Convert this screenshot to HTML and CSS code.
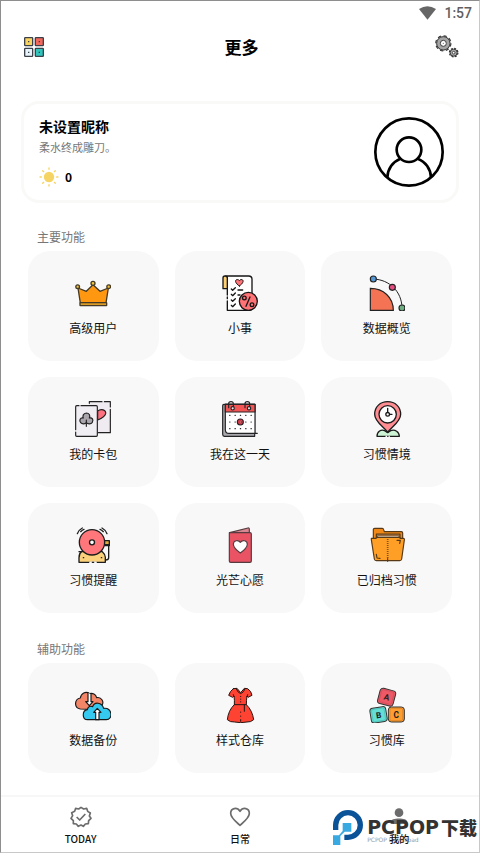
FILE: index.html
```html
<!DOCTYPE html>
<html lang="zh-CN">
<head>
<meta charset="utf-8">
<meta name="viewport" content="width=device-width, initial-scale=1">
<title>更多</title>
<link rel="stylesheet" href="styles.css">
</head>
<body>
<div class="app">
  <div class="status">
    <svg class="wifi" viewBox="0 0 51 42" aria-hidden="true"><path d="M0 9Q25-8 51 9L25.500 41Z" fill="#666"/></svg>
    <span>1:57</span>
  </div>

  <header class="header">
    <button class="icon-btn" type="button" aria-label="布局">
      <svg class="layout-icon" viewBox="0 0 60 60" stroke="#3c4048" stroke-width="4">
        <rect x="2" y="2" width="24" height="24" rx="2" fill="#fbd45f"/>
        <rect x="34" y="2" width="24" height="24" rx="2" fill="#f4685c"/>
        <rect x="2" y="34" width="24" height="24" rx="2" fill="#e8f4fb"/>
        <rect x="34" y="34" width="24" height="24" rx="2" fill="#2fc5bd"/>
        <path d="M12 14h4M44 14h4M12 46h4M44 46h4"/>
      </svg>
    </button>
    <h1 class="title">更多</h1>
    <button class="icon-btn icon-btn-end" type="button" aria-label="设置">
      <svg class="gear-icon" viewBox="0 0 72 69" fill="none">
        <circle cx="25" cy="25" r="21" stroke="#333" stroke-width="7" stroke-dasharray="9 7.500"/>
        <circle cx="25" cy="25" r="15" stroke="#a5a5a5" stroke-width="13"/>
        <circle cx="25" cy="25" r="20" stroke="#3c3c3c" stroke-width="3"/>
        <circle cx="25" cy="25" r="9" fill="#fff" stroke="#3c3c3c" stroke-width="3"/>
        <circle cx="25" cy="25" r="2" fill="#777"/>
        <circle cx="56" cy="53" r="12.500" stroke="#333" stroke-width="4" stroke-dasharray="6 3.800"/>
        <circle cx="56" cy="53" r="10.500" fill="#aaa" stroke="#3c3c3c" stroke-width="3"/>
        <circle cx="56" cy="53" r="4" fill="#fff" stroke="#444" stroke-width="3"/>
      </svg>
    </button>
  </header>

  <main class="main">
    <section class="profile">
      <div class="profile-text">
        <h2 class="nickname">未设置昵称</h2>
        <p class="motto">柔水终成雕刀。</p>
        <div class="sun-row">
          <svg class="sun" viewBox="0 0 60 60" aria-hidden="true">
            <circle cx="30" cy="30" r="15.500" fill="#f6d464"/>
            <path d="M30 3v4M30 53v4M3 30h4M53 30h4M11 11l3 3M46 46l3 3M11 49l3-3M46 14l3-3" stroke="#f6d464" stroke-width="4" stroke-linecap="round"/>
          </svg>
          <span>0</span>
        </div>
      </div>
      <svg class="avatar" viewBox="0 0 210 210" fill="none" stroke="#000" stroke-width="8" role="img" aria-label="头像">
        <circle cx="105" cy="105" r="101"/>
        <circle cx="105" cy="98" r="37"/>
        <path d="M40 181C41 156 56 134 79 125M131 125c24 9 39 31 40 56"/>
      </svg>
    </section>

    <h2 class="section-title">主要功能</h2>
    <div class="grid">
      <button class="tile" type="button">
        <svg class="tile-icon" viewBox="0 0 108 108" stroke="#443a26" stroke-width="4" stroke-linejoin="round">
          <path d="M9 39L34 49 54 29 75 49 100 39 93 84H16Z" fill="#ff9810"/>
          <rect x="15" y="83" width="80" height="9" rx="1" fill="#d99a26"/>
          <circle cx="8" cy="35" r="5.500" fill="#f4c53b"/><circle cx="54" cy="25" r="6" fill="#f4c53b"/><circle cx="101" cy="35" r="5.500" fill="#f4c53b"/>
        </svg>
        <span>高级用户</span>
      </button>
      <button class="tile" type="button">
        <svg class="tile-icon" viewBox="0 0 108 108" fill="none" stroke="#161616" stroke-width="4" stroke-linejoin="round" stroke-linecap="round">
          <path d="M16 60V8Q16 3 11 3H80Q90 3 90 13V100Q90 106 84 106H16V78" fill="#fff"/>
          <path d="M16 41H3V9Q3 3 9 3T16 9Z" fill="#fbcf72"/>
          <path d="M52 33C30 18 45 8 52 17 59 8 74 18 52 33Z" fill="#ff7478" stroke-width="3"/>
          <path d="M28 42l4 4 8-8M48 45h14M28 58l4 4 8-8M48 60h6M28 75l4 4 8-8M28 91l4 4 8-8M16 66v5"/>
          <circle cx="79" cy="79" r="27" fill="#ff7276"/>
          <circle cx="67" cy="69" r="5.500"/><circle cx="90" cy="89" r="5.500"/><path d="M84 66L72 94"/>
        </svg>
        <span>小事</span>
      </button>
      <button class="tile" type="button">
        <svg class="tile-icon" viewBox="0 0 108 108" stroke="#222" stroke-width="3.500" fill="none">
          <path d="M4 40V106H73C73 67 43 40 4 40Z" fill="#f47355"/>
          <path d="M13 12C62 14 98 50 99 98" stroke-width="3"/>
          <circle cx="13" cy="12" r="9" fill="#5597d3"/><circle cx="70" cy="37" r="9" fill="#e64c80"/><circle cx="99" cy="99" r="9" fill="#6fae82"/>
        </svg>
        <span>数据概览</span>
      </button>

      <button class="tile" type="button">
        <svg class="tile-icon" viewBox="0 0 108 108" fill="none" stroke="#222" stroke-width="3.500" stroke-linecap="round" stroke-linejoin="round">
          <path d="M42 2H106V95H68V15H42Z" fill="#efebf1" stroke="none"/>
          <path d="M43 7V2H81M88 2H106V18M106 25V95H70"/>
          <path d="M68 30C78 22 94 26 92 38 90 48 78 53 68 57Z" fill="#ff7181"/>
          <rect x="2" y="14" width="65" height="92" rx="3" fill="#f1eef3" stroke="none"/>
          <path d="M12 14H5Q2 14 2 17V86M2 93V103Q2 106 5 106H64Q67 106 67 103V17Q67 14 64 14H18"/>
          <path d="M34 36C25 37 22 45 25 51 15 49 12 59 17 65 22 71 31 69 34 65 38 70 48 70 52 64 56 56 52 49 43 51 47 43 42 36 34 36Z" fill="#aaa5ad"/>
          <path d="M34 57V76"/>
        </svg>
        <span>我的卡包</span>
      </button>
      <button class="tile" type="button">
        <svg class="tile-icon" viewBox="0 0 108 108" fill="none" stroke="#242427" stroke-width="3.500" stroke-linejoin="round" stroke-linecap="round">
          <path d="M6 10H98V106H7Q2 106 2 100V14Q2 10 6 10Z" fill="#a9a9ad"/>
          <path d="M10 10H99V97H21Q10 97 10 86Z" fill="#fff"/>
          <path d="M10 10H99V33H10Z" fill="#f35555"/>
          <path d="M20 20V8Q20 2 27 2T34 8V16M69 20V8Q69 2 76 2T83 8V16M99 97h7"/>
          <circle cx="32" cy="22" r="5" fill="#e9e9ed"/><circle cx="81" cy="22" r="5" fill="#e9e9ed"/>
          <path d="M23 43h1M39 43h1M55 43h1M71 43h1M87 43h1M23 63h1M39 63h1M71 63h1M87 63h1M23 83h1M39 83h1M55 83h1M71 83h1M87 83h1"/>
          <circle cx="55" cy="63" r="9" fill="#ed3b4d"/><circle cx="55" cy="63" r="3" fill="#ff8186" stroke-width="1"/>
        </svg>
        <span>我在这一天</span>
      </button>
      <button class="tile" type="button">
        <svg class="tile-icon" viewBox="0 0 108 108" fill="none" stroke="#1c1c1c" stroke-width="4" stroke-linejoin="round" stroke-linecap="round">
          <path d="M24 106C24 91 37 84 47 89L56 95 65 89C78 84 91 93 91 106Z" fill="#cdf4d4"/>
          <path d="M51 106h10" stroke="#f8f8f8"/><path d="M56 106h1"/>
          <path d="M56 94C47 79 17 64 17 40 17 17 34 2 56 2S95 17 95 40C95 64 65 79 56 94Z" fill="#ff8d92"/>
          <circle cx="56" cy="40" r="26" fill="#fff"/>
          <circle cx="56" cy="40" r="5.500"/><path d="M56 34V22M62 40h7"/>
        </svg>
        <span>习惯情境</span>
      </button>

      <button class="tile" type="button">
        <svg class="tile-icon" viewBox="0 0 108 108" fill="none" stroke="#1d1d1d" stroke-width="4" stroke-linejoin="round" stroke-linecap="round">
          <path d="M88 44H103V56H91M101 56V92Q101 99 91 99"/>
          <path d="M86 41H103V53H86Z" fill="#e0ac3e"/>
          <path d="M12 74H82Q91 82 91 91V106H12V92Q12 79 20 74Z" fill="#fbd27b"/>
          <path d="M45 106h18" stroke="#f8f8f8" stroke-width="5"/><path d="M52 106h4M25 92h1M79 92h1"/>
          <circle cx="51" cy="46" r="38" fill="#ff777b"/>
          <circle cx="51" cy="46" r="7.500" fill="#fff"/>
          <path d="M7 20Q12 8 22 3M96 20Q91 8 81 3M85 14Q80 9 75 7M17 14Q22 9 27 7"/>
        </svg>
        <span>习惯提醒</span>
      </button>
      <button class="tile" type="button">
        <svg class="tile-icon" viewBox="0 0 108 108" stroke="#563b40" stroke-width="3.500" stroke-linejoin="round">
          <path d="M23 17L78 3Q82 2 82 7V18Z" fill="#d8868f"/>
          <path d="M22 17H84Q88 17 88 21V102Q88 106 84 106H26Q22 106 22 102Z" fill="#e95363"/>
          <path d="M55 78C42 69 34 62 34 52 34 40 49 37 55 46 61 37 76 40 76 52 76 62 68 69 55 78Z" fill="#fff"/>
        </svg>
        <span>光芒心愿</span>
      </button>
      <button class="tile" type="button">
        <svg class="tile-icon" viewBox="0 0 108 108" fill="none" stroke="#573817" stroke-width="3.500" stroke-linejoin="round" stroke-linecap="round">
          <path d="M13 45V7Q13 4 17 4H40Q43 4 44 8L46 14H97Q101 14 101 18V43Z" fill="#f18815"/>
          <path d="M22 38V21H93V38" fill="#a77545"/>
          <path d="M27 27H89V37H27Z" fill="#eee2ce" stroke-width="1"/>
          <path d="M7 34H21L25 31H90L94 34H103Q107 34 106 39L98 96Q97 101 92 101H22Q17 101 16 96L7 38Z" fill="#ff9f25"/>
          <path d="M56 36V96" stroke-width="5" stroke-dasharray="2 4" stroke-linecap="butt"/>
          <path d="M56 95v8M22 82l2 11 9 1M84 40h10l-2 9"/>
        </svg>
        <span>已归档习惯</span>
      </button>
    </div>

    <h2 class="section-title section-title-next">辅助功能</h2>
    <div class="grid">
      <button class="tile" type="button">
        <svg class="tile-icon" viewBox="0 0 108 108" stroke="#181818" stroke-width="3.500" stroke-linejoin="round" stroke-linecap="round">
          <path d="M16 66C-4 62-2 36 16 33 18 19 32 11 44 20 53 17 62 22 65 32 79 29 88 44 81 55L54 67Z" fill="#f48668"/>
          <path d="M39 17V44H32L43 56 54 44H48V22" fill="#fff"/>
          <path d="M38 98C20 98 21 70 37 68 39 58 47 56 53 59 58 44 80 45 86 64 112 60 115 98 94 98Z" fill="#35c9f0"/>
          <path d="M62 98V76H56L67 64 78 76H72V98Z" fill="#fff"/>
        </svg>
        <span>数据备份</span>
      </button>
      <button class="tile" type="button">
        <svg class="tile-icon" viewBox="0 0 108 108" fill="none" stroke="#251512" stroke-width="3" stroke-linejoin="round" stroke-linecap="round">
          <path d="M34 5L45 4 56 17 67 4 77 5Q88 12 90 25L78 31 75 27Q73 40 73 53 91 70 95 98 86 106 75 105L56 107 38 105Q24 106 16 98 19 70 37 53 38 40 36 27L32 31 20 25Q24 12 34 5Z" fill="#ff4333"/>
          <path d="M43 6Q47 17 56 20 65 17 69 6M37 53H73M67 54V73M56 75v1M56 28v1M56 36v1M56 44v1M56 87v1M56 98v5M34 23l2 6M77 23l-2 6"/>
        </svg>
        <span>样式仓库</span>
      </button>
      <button class="tile" type="button">
        <svg class="tile-icon" viewBox="0 0 108 108" stroke="#333" stroke-width="3">
          <g transform="rotate(15 53 30)"><rect x="29" y="7" width="48" height="47" rx="9" fill="#ed5966"/><rect x="34" y="11" width="38" height="38" rx="5" fill="none" stroke="#c94c58" stroke-width="2"/><text class="block-letter" x="53" y="39">A</text></g>
          <g transform="rotate(-9 29 86)"><rect x="5" y="61" width="48" height="45" rx="9" fill="#63dfd5"/><rect x="10" y="65" width="38" height="37" rx="5" fill="none" stroke="#4bb8b1" stroke-width="2"/><text class="block-letter" x="29" y="93">B</text></g>
          <rect x="58" y="60" width="48" height="45" rx="9" fill="#ff9d30"/><rect x="63" y="64" width="38" height="37" rx="5" fill="none" stroke="#cf7e28" stroke-width="2"/><text class="block-letter" x="82" y="92">C</text>
        </svg>
        <span>习惯库</span>
      </button>
    </div>
  </main>

  <nav class="nav">
    <a class="nav-item" href="#today">
      <svg class="nav-icon" viewBox="0 0 66 66" fill="none" stroke="#6c6c6c" stroke-width="5" stroke-linejoin="round">
        <path d="M33 4L41 9 50 7 53 16 61 21 58 30 63 37 56 44 55 53 46 54 40 61 33 57 25 61 19 54 10 53 10 44 3 37 8 29 5 20 14 16 17 7 26 9Z"/>
        <path d="M20 33L29 42 46 24"/>
      </svg>
      <span>TODAY</span>
    </a>
    <a class="nav-item" href="#daily">
      <svg class="nav-icon" viewBox="0 0 66 66" fill="none" stroke="#6c6c6c" stroke-width="5" stroke-linejoin="round">
        <path d="M33 58C20 47 5 36 5 22 5 6 24 2 33 16 42 2 61 6 61 22 61 36 46 47 33 58Z"/>
      </svg>
      <span>日常</span>
    </a>
    <a class="nav-item" href="#mine" aria-current="page">
      <svg class="nav-icon" viewBox="0 0 66 66" fill="#6c6c6c"><circle cx="33" cy="20" r="13"/><path d="M8 54V48C8 34 58 34 58 48V54Z"/></svg>
      <span>我的</span>
    </a>
    <div class="watermark">
      <svg class="mark" viewBox="0 0 90 105" aria-hidden="true">
        <path d="M8 60V45A37 37 0 1 1 45 82H34" fill="none" stroke="#0b5398" stroke-width="16"/>
        <path d="M29 39H55V65H35L22 78V105H0V76H18L29 63Z" fill="#39a9e2"/>
      </svg>
      <div class="mark-words">
        <div class="mark-name"><span class="mark-latin">PCPOP</span><span>下载</span></div>
        <div class="mark-sub">PCPOP Download</div>
      </div>
    </div>
  </nav>
</div>
</body>
</html>
```
FILE: styles.css
```css
* {
  box-sizing: border-box;
}

body {
  margin: 0;
  background: #fff;
  color: #111;
  font-family: "Noto Sans CJK SC", sans-serif;
}

h1, h2, p {
  margin: 0;
}

button {
  border: 0;
  padding: 0;
  background: none;
  color: inherit;
  font: inherit;
}

svg {
  display: block;
  flex: none;
}

.app {
  display: flex;
  flex-direction: column;
  min-height: 100vh;
  border: 1px solid #c8c8c8;
  border-top-color: #8e8e8e;
  border-left-color: #8e8e8e;
}

.status {
  display: flex;
  align-items: center;
  justify-content: flex-end;
  gap: 8px;
  height: 23px;
  padding-right: 7px;
  color: #5f5f5f;
  font: 500 14px/20px Roboto, sans-serif;
}

.wifi {
  width: 17px;
  height: 14px;
}

.header {
  display: grid;
  grid-template-columns: 1fr auto 1fr;
  align-items: center;
  height: 45px;
  padding: 0 20px 0 23px;
}

.icon-btn {
  justify-self: start;
}

.icon-btn-end {
  justify-self: end;
}

.layout-icon {
  width: 20px;
  height: 20px;
}

.gear-icon {
  width: 24px;
  height: 23px;
}

.title {
  font-size: 17px;
  line-height: 24px;
  color: #000;
}

.main {
  padding: 32px 20px 22px;
}

.profile {
  display: flex;
  align-items: center;
  justify-content: space-between;
  padding: 13px 12px 13px 15px;
  border: 3px solid #f9f9f8;
  border-radius: 18px;
}

.nickname {
  font-size: 14px;
  line-height: 18px;
  color: #000;
}

.motto {
  font-size: 11px;
  line-height: 24px;
  color: #777;
}

.sun-row {
  display: flex;
  align-items: center;
  gap: 6px;
  height: 20px;
  margin-top: 8px;
  font-size: 12px;
  font-weight: 700;
  line-height: 20px;
  color: #000;
}

.sun {
  width: 20px;
  height: 20px;
}

.avatar {
  width: 70px;
  height: 70px;
}

.section-title {
  margin: 24px 0 4px;
  padding-left: 16px;
  font-size: 12px;
  font-weight: 400;
  line-height: 20px;
  color: #777;
}

.section-title-next {
  margin-top: 26px;
}

.grid {
  display: grid;
  grid-template-columns: repeat(3, 1fr);
  gap: 16px;
  padding: 0 7px;
}

.tile {
  display: flex;
  flex-direction: column;
  align-items: center;
  gap: 8px;
  padding: 24px 0;
  border-radius: 22px;
  background: #f8f8f8;
  font-size: 12px;
  line-height: 18px;
}

.tile-icon {
  width: 36px;
  height: 36px;
}

.block-letter {
  fill: #222;
  stroke: none;
  font: bold 25px Roboto, sans-serif;
  text-anchor: middle;
}

.nav {
  position: relative;
  display: grid;
  grid-template-columns: repeat(3, 1fr);
  margin-top: auto;
  padding: 9px 0 5px;
  border-top: 2px solid #f7f7f7;
}

.nav-item {
  display: flex;
  flex-direction: column;
  align-items: center;
  gap: 3px;
  color: #111;
  font-size: 10px;
  font-weight: 500;
  line-height: 16px;
  text-decoration: none;
}

.nav-item span {
  position: relative;
  z-index: 2;
}

.nav-icon {
  width: 22px;
  height: 22px;
}

.watermark {
  position: absolute;
  right: 2px;
  bottom: 7px;
  z-index: 1;
  display: flex;
  gap: 4px;
  pointer-events: none;
}

.mark {
  width: 30px;
  height: 35px;
}

.mark-words {
  padding-top: 8px;
}

.mark-name {
  display: flex;
  align-items: center;
  gap: 2px;
  color: #333;
  font-size: 18px;
  font-weight: 900;
  line-height: 18px;
}

.mark-latin {
  font-family: "DejaVu Sans", sans-serif;
  font-size: 19px;
}

.mark-sub {
  color: #999;
  font: 6px/8px "DejaVu Sans", sans-serif;
}
```
